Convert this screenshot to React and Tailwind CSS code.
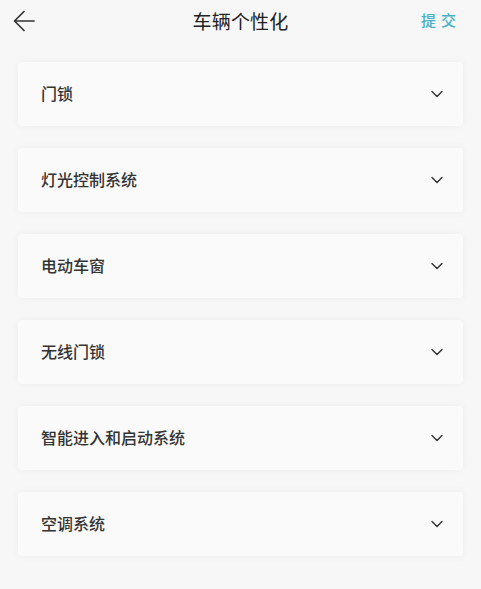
import { ChevronDown } from "lucide-react";

const items = ["门锁", "灯光控制系统", "电动车窗", "无线门锁", "智能进入和启动系统", "空调系统"];

export default function App() {
  return (
    <div
      className="min-h-[589px] w-[481px] bg-[#f7f7f7] text-[#2b2b2b]"
      style={{ fontFamily: '"Noto Sans CJK SC", "Noto Sans", sans-serif' }}
    >
      <div className="relative flex h-[42px] items-center justify-center">
        <button className="absolute left-[13px] top-[10px] text-[#333]">
          <svg width="22" height="22" viewBox="0 0 22 22" fill="none" stroke="currentColor" strokeWidth="1.7" strokeLinecap="round" strokeLinejoin="round">
            <path d="M21 11H2M11 1.5L1.5 11L11 20.5" />
          </svg>
        </button>
        <div className="text-[19px] font-normal tracking-[0.2px] text-[#222]">车辆个性化</div>
        <button className="absolute right-[20px] top-[9px] text-[15px] font-medium tracking-[5px] text-[#45b0c7]">提交</button>
      </div>

      <div className="flex flex-col gap-[22px] px-[18px] pt-[20px]">
        {items.map((label) => (
          <div
            key={label}
            className="flex h-[64px] items-center justify-between rounded-[4px] bg-[#fafafa] pl-[23px] pr-[16px] shadow-[0_0_10px_rgba(0,0,0,0.045)]"
          >
            <span className="-mt-[3px] text-[16px] font-medium text-[#333]">{label}</span>
            <ChevronDown size={20} strokeWidth={1.7} className="text-[#333]" />
          </div>
        ))}
      </div>
    </div>
  );
}
